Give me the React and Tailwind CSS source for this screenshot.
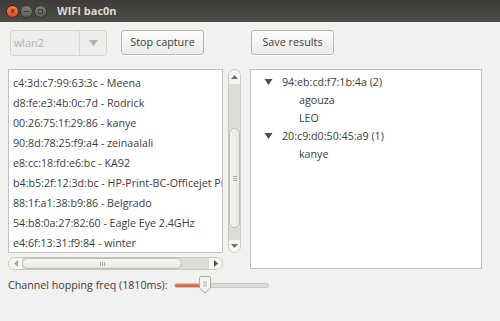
import React from "react";

const rows = [
  "c4:3d:c7:99:63:3c - Meena",
  "d8:fe:e3:4b:0c:7d - Rodrick",
  "00:26:75:1f:29:86 - kanye",
  "90:8d:78:25:f9:a4 - zeinaalali",
  "e8:cc:18:fd:e6:bc - KA92",
  "b4:b5:2f:12:3d:bc - HP-Print-BC-Officejet Pro",
  "88:1f:a1:38:b9:86 - Belgrado",
  "54:b8:0a:27:82:60 - Eagle Eye 2.4GHz",
  "e4:6f:13:31:f9:84 - winter",
];

function Tri() {
  return (
    <svg width="9" height="8" viewBox="0 0 9 8" className="shrink-0">
      <path d="M0.5 1 L8.5 1 L4.5 7 Z" fill="#4c4c4c" />
    </svg>
  );
}

export default function App() {
  return (
    <div
      className="w-[500px] h-[321px] bg-[#f2f1f0] flex flex-col overflow-hidden text-[#3c3c3c]"
      style={{ fontFamily: '"Open Sans", "Noto Sans", sans-serif' }}
    >
      {/* Title bar */}
      <div className="h-[22px] shrink-0 bg-gradient-to-b from-[#3c3b37] to-[#4e4c46] flex items-center pl-[6px] gap-[1px]">
        <div className="w-[13px] h-[13px] rounded-full bg-gradient-to-b from-[#f7804f] to-[#e0481c] border border-[#3a2a22] flex items-center justify-center">
          <span className="text-[8px] leading-none text-[#5a1e08] font-bold">×</span>
        </div>
        <div className="w-[13px] h-[13px] rounded-full bg-gradient-to-b from-[#7c7b76] to-[#5e5d58] border border-[#35342f] flex items-center justify-center">
          <div className="w-[5px] h-[1px] bg-[#3e3d39]" />
        </div>
        <div className="w-[13px] h-[13px] rounded-full bg-gradient-to-b from-[#7c7b76] to-[#5e5d58] border border-[#35342f] flex items-center justify-center">
          <div className="w-[5px] h-[5px] border border-[#3e3d39]" />
        </div>
        <span className="ml-[9px] text-[11px] font-bold text-[#dfdbd2]">WIFI bac0n</span>
      </div>

      {/* Toolbar */}
      <div className="flex items-start mt-[8px] pl-[10px]">
        <div className="w-[97px] h-[26px] rounded-[3px] border border-[#d6d4d0] bg-[#ededeb] flex items-center">
          <span className="flex-1 pl-[3px] text-[10.8px] text-[#b3b1ad]">wlan2</span>
          <div className="w-[1px] h-[24px] bg-[#d6d4d0]" />
          <div className="w-[26px] flex justify-center">
            <svg width="9" height="6" viewBox="0 0 9 6">
              <path d="M0 0 L9 0 L4.5 6 Z" fill="#b5b3af" />
            </svg>
          </div>
        </div>
        <button className="ml-[14px] w-[83px] h-[25px] rounded-[3px] border border-[#b8b6b2] bg-gradient-to-b from-[#fbfbfa] to-[#ebeae8] text-[10.8px] text-[#3c3c3c] flex items-center justify-center shadow-[0_1px_0_#fff]">
          Stop capture
        </button>
        <button className="ml-[47px] w-[83px] h-[25px] rounded-[3px] border border-[#b8b6b2] bg-gradient-to-b from-[#fbfbfa] to-[#ebeae8] text-[10.8px] text-[#3c3c3c] flex items-center justify-center shadow-[0_1px_0_#fff]">
          Save results
        </button>
      </div>

      {/* Panels */}
      <div className="flex mt-[13px] pl-[8px]">
        <div className="flex flex-col">
          <div className="flex">
            <div className="w-[215px] h-[184px] bg-white border border-[#c3c1bd] overflow-hidden pl-[4px] pt-[3px]">
              {rows.map((r) => (
                <div key={r} className="h-[20px] leading-[20px] text-[10.7px] whitespace-nowrap">
                  {r}
                </div>
              ))}
            </div>
            {/* vertical scrollbar */}
            <div className="ml-[5px] w-[13px] h-[184px] rounded-full border border-[#c9c7c3] bg-[#e3e2e0] flex flex-col items-center overflow-hidden">
              <div className="h-[14px] w-full bg-[#f6f6f5] flex items-center justify-center">
                <svg width="7" height="4" viewBox="0 0 7 4">
                  <path d="M0 4 L7 4 L3.5 0 Z" fill="#6d6c68" />
                </svg>
              </div>
              <div className="h-[44px] w-full bg-[#dcdbd8]" />
              <div className="h-[100px] w-[11px] rounded-full bg-gradient-to-r from-[#f4f4f3] to-[#e9e8e6] border border-[#bdbbb7] flex items-center justify-center">
                <div className="flex flex-col gap-[1px]">
                  <div className="w-[4px] h-[1px] bg-[#a9a7a3]" />
                  <div className="w-[4px] h-[1px] bg-[#a9a7a3]" />
                  <div className="w-[4px] h-[1px] bg-[#a9a7a3]" />
                </div>
              </div>
              <div className="flex-1 w-full bg-[#dcdbd8]" />
              <div className="h-[12px] w-full bg-[#f6f6f5] flex items-center justify-center">
                <svg width="7" height="4" viewBox="0 0 7 4">
                  <path d="M0 0 L7 0 L3.5 4 Z" fill="#6d6c68" />
                </svg>
              </div>
            </div>
          </div>
          {/* horizontal scrollbar */}
          <div className="mt-[4px] w-[215px] h-[13px] rounded-full border border-[#c9c7c3] bg-[#dcdbd8] flex items-center overflow-hidden">
            <div className="w-[13px] h-full bg-[#f6f6f5] flex items-center justify-center">
              <svg width="4" height="7" viewBox="0 0 4 7">
                <path d="M4 0 L4 7 L0 3.5 Z" fill="#a9a7a3" />
              </svg>
            </div>
            <div className="w-[160px] h-[11px] rounded-full bg-gradient-to-b from-[#f7f7f6] to-[#e9e8e6] border border-[#bdbbb7] flex items-center justify-center">
              <div className="flex gap-[1px]">
                <div className="w-[1px] h-[4px] bg-[#a9a7a3]" />
                <div className="w-[1px] h-[4px] bg-[#a9a7a3]" />
                <div className="w-[1px] h-[4px] bg-[#a9a7a3]" />
              </div>
            </div>
            <div className="flex-1" />
            <div className="w-[13px] h-full bg-[#f6f6f5] flex items-center justify-center">
              <svg width="4" height="7" viewBox="0 0 4 7">
                <path d="M0 0 L0 7 L4 3.5 Z" fill="#4c4c4c" />
              </svg>
            </div>
          </div>
        </div>

        {/* Tree */}
        <div className="ml-[9px] w-[232px] h-[200px] bg-white border border-[#c3c1bd] pt-[3px] text-[10.7px]">
          <div className="h-[18px] flex items-center pl-[13px]">
            <Tri />
            <span className="ml-[9px]">94:eb:cd:f7:1b:4a (2)</span>
          </div>
          <div className="h-[18px] flex items-center pl-[48px]">agouza</div>
          <div className="h-[18px] flex items-center pl-[48px]">LEO</div>
          <div className="h-[18px] flex items-center pl-[13px]">
            <Tri />
            <span className="ml-[9px]">20:c9:d0:50:45:a9 (1)</span>
          </div>
          <div className="h-[18px] flex items-center pl-[48px]">kanye</div>
        </div>
      </div>

      {/* Slider row */}
      <div className="flex items-center mt-[6px] pl-[8px] h-[18px]">
        <span className="text-[10.7px] text-[#3c3c3c]">Channel hopping freq (1810ms):</span>
        <div className="ml-[6px] relative w-[95px] h-[18px] flex items-center">
          <div className="w-full h-[5px] rounded-full bg-[#dcdbd8] border border-[#c9c7c3] overflow-hidden">
            <div className="h-full w-[30px] bg-gradient-to-b from-[#f27a4f] to-[#e05a2b]" />
          </div>
          <div className="absolute left-[25px] top-0 w-[12px] h-[18px]">
            <svg width="12" height="18" viewBox="0 0 12 18">
              <path d="M2 0.5 H10 Q11.5 0.5 11.5 2 V12 L6 17 L0.5 12 V2 Q0.5 0.5 2 0.5 Z" fill="#f4f4f3" stroke="#a9a7a3" />
              <path d="M4 6 H8 M4 8 H8 M4 10 H8" stroke="#b5b3af" strokeWidth="1" />
            </svg>
          </div>
        </div>
      </div>
    </div>
  );
}
